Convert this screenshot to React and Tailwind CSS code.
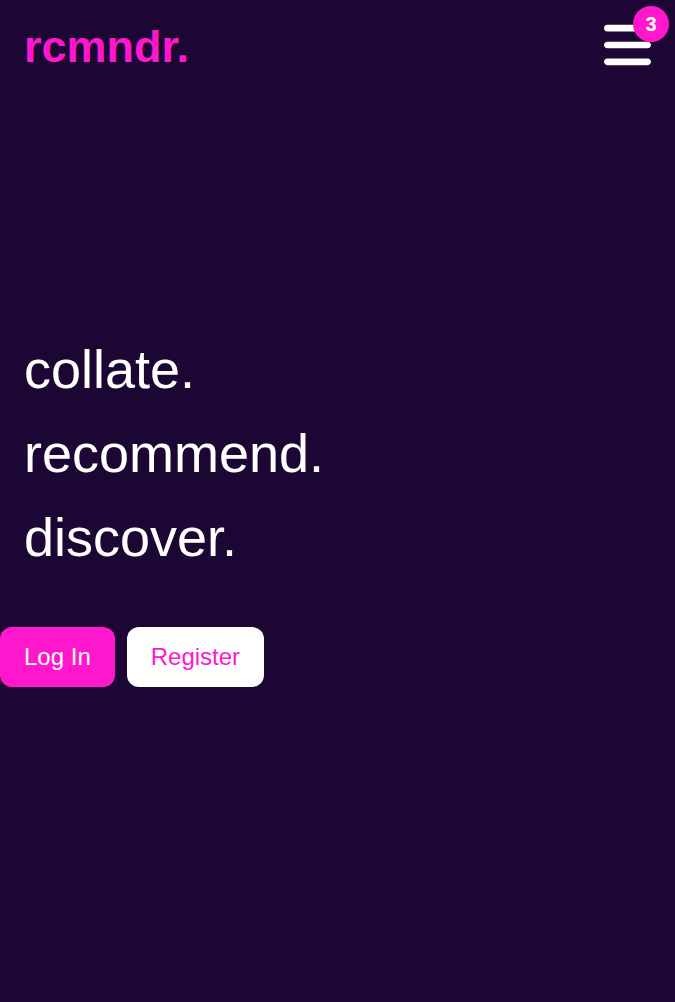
import { FaBars } from "react-icons/fa6";

export default function App() {
  return (
    <div className="flex min-h-screen flex-col bg-[#1c0634] font-['Liberation_Sans',Arial,sans-serif] text-white">
      <header className="flex h-24 items-start justify-between px-6 pt-[18px]">
        <a href="#" className="text-[45px] leading-[58px] font-bold text-[#ff17ce]">
          rcmndr.
        </a>
        <button type="button" aria-label="Menu, 3 notifications" className="relative">
          <FaBars className="h-[54px] w-[47px]" />
          <span className="absolute -top-3 -right-[18px] flex size-9 items-center justify-center rounded-full bg-[#ff17ce] text-xl font-bold">
            3
          </span>
        </button>
      </header>
      <main className="flex flex-1 flex-col justify-center pb-[84px]">
        <h1 className="px-6 text-[54px] leading-[84px] font-normal">
          <span className="block">collate.</span>
          <span className="block">recommend.</span>
          <span className="block">discover.</span>
        </h1>
        <div className="mt-12 flex gap-3">
          <a href="#login" className="rounded-xl bg-[#ff17ce] px-6 py-3 text-2xl leading-9">
            Log In
          </a>
          <a href="#register" className="rounded-xl bg-white px-6 py-3 text-2xl leading-9 text-[#ff17ce]">
            Register
          </a>
        </div>
      </main>
    </div>
  );
}
